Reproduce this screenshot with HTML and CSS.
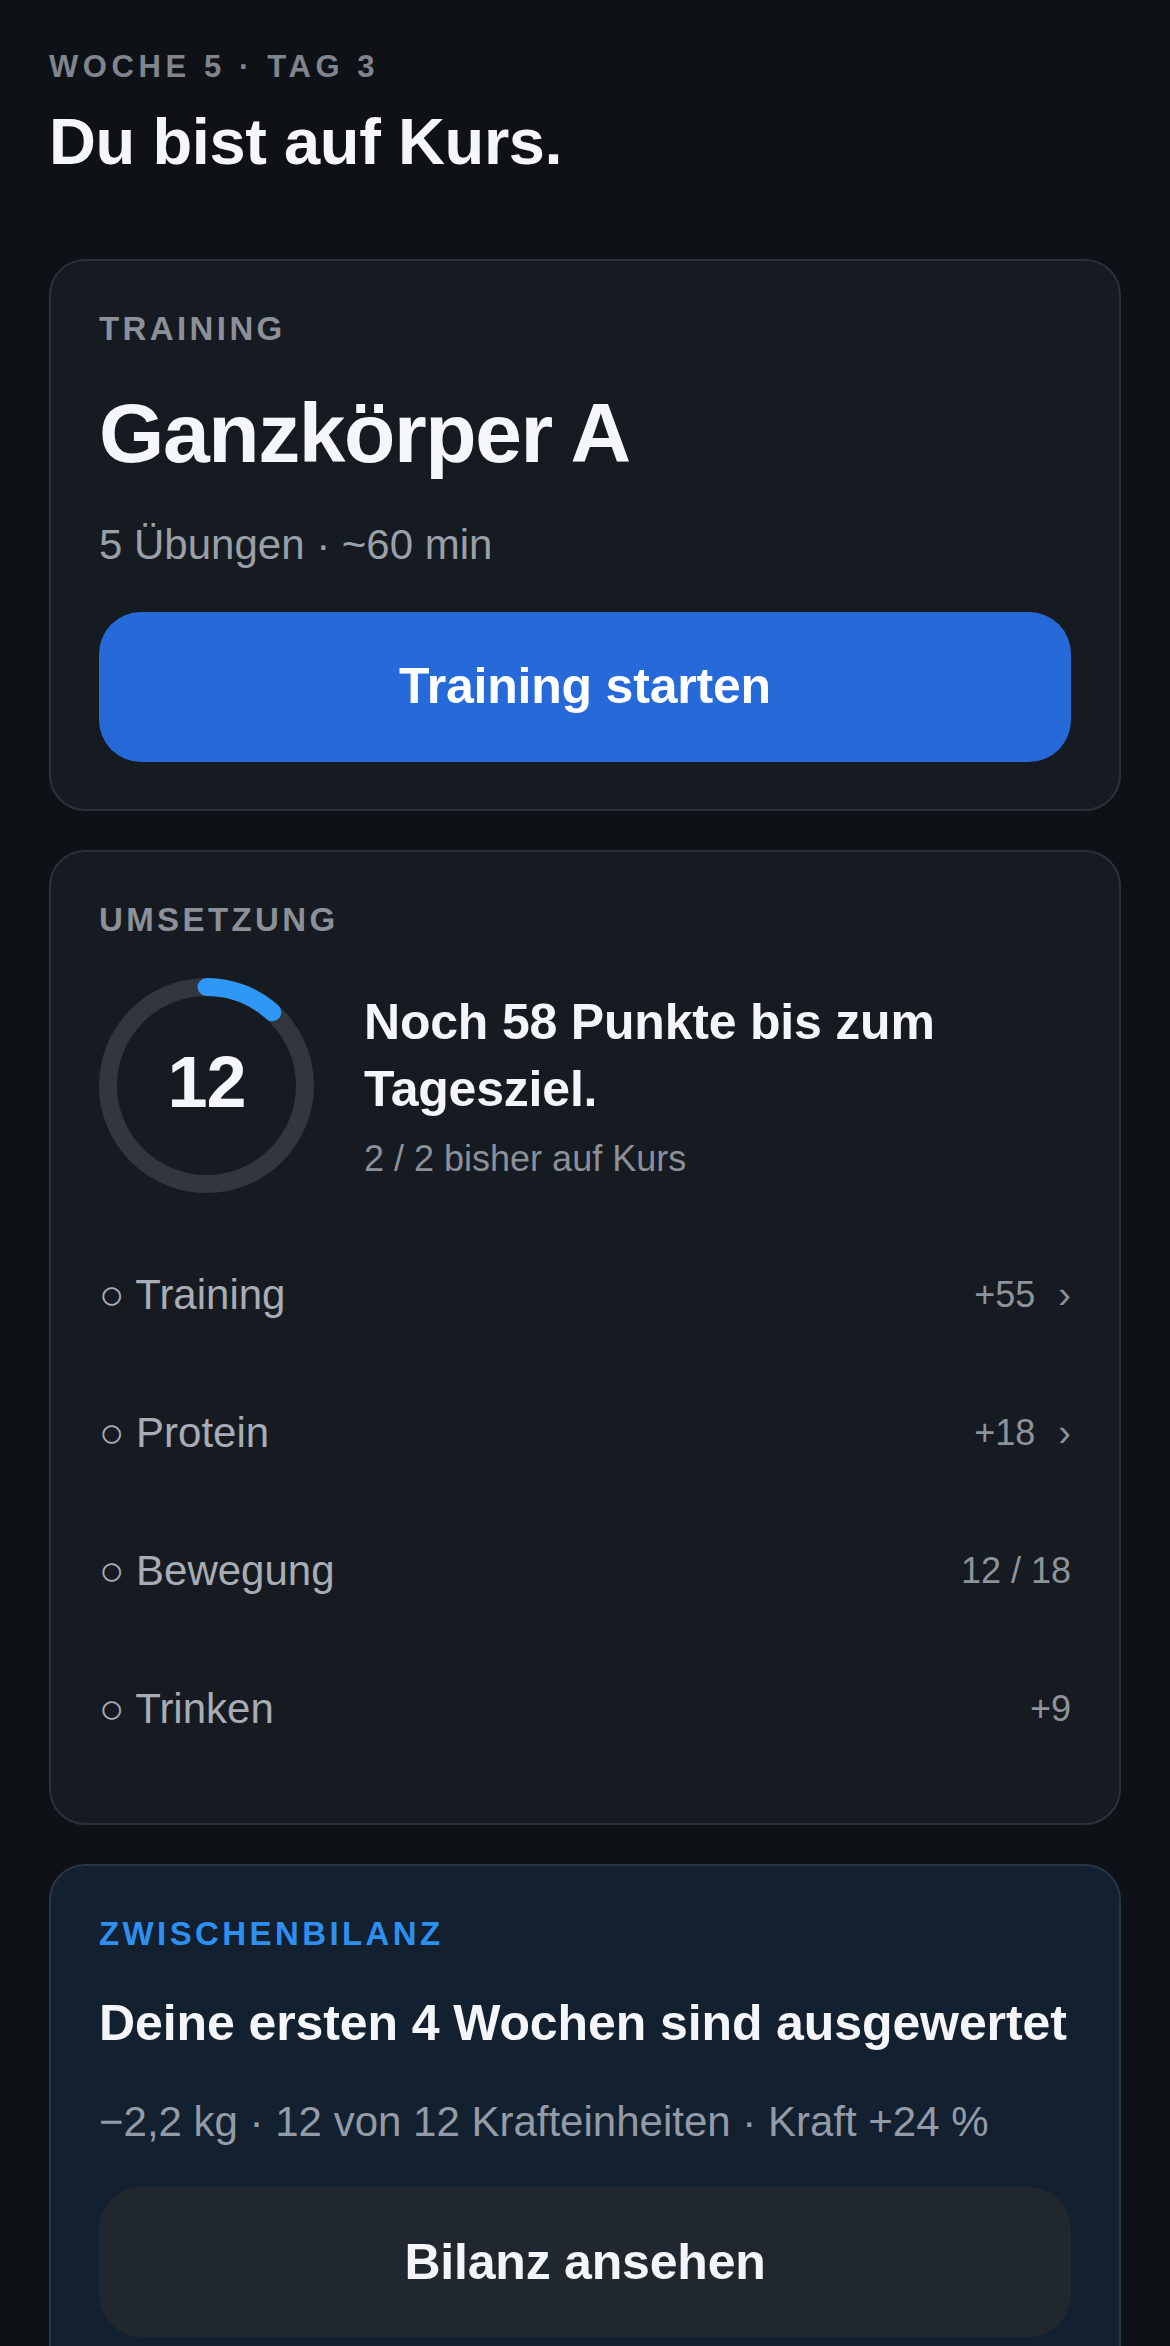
FILE: index.html
```html
<!DOCTYPE html>
<html lang="de">
    <head>
        <meta charset="UTF-8">
        <meta name="viewport" content="width=device-width, initial-scale=1.0">
        <title>Heute</title>
        <link rel="stylesheet" href="styles.css">
    </head>
    <body>
        <main class="page">
            <header class="intro">
                <p class="eyebrow">WOCHE 5 · TAG 3</p>
                <h1>Du bist auf Kurs.</h1>
            </header>

            <section class="card card-training">
                <p class="label">TRAINING</p>
                <h2 class="workout-title">Ganzkörper A</h2>
                <p class="meta">5 Übungen · ~60 min</p>
                <button class="btn btn-primary" type="button">Training starten</button>
            </section>

            <section class="card card-progress">
                <p class="label">UMSETZUNG</p>
                <div class="score">
                    <div class="ring">
                        <svg width="215" height="215" viewBox="0 0 215 215">
                            <circle class="ring-track" cx="107.5" cy="107.5" r="98.5" />
                            <circle class="ring-value" cx="107.5" cy="107.5" r="98.5" stroke-dasharray="72 619" transform="rotate(-90 107.5 107.5)" />
                        </svg>
                        <span class="ring-number">12</span>
                    </div>
                    <div class="score-text">
                        <h3 class="heading">Noch 58 Punkte bis zum Tagesziel.</h3>
                        <p class="score-sub">2 / 2 bisher auf Kurs</p>
                    </div>
                </div>
                <ul class="rows">
                    <li class="row"><span class="row-label">○ Training</span><span class="row-value">+55<span class="chev">›</span></span></li>
                    <li class="row"><span class="row-label">○ Protein</span><span class="row-value">+18<span class="chev">›</span></span></li>
                    <li class="row"><span class="row-label">○ Bewegung</span><span class="row-value">12 / 18</span></li>
                    <li class="row"><span class="row-label">○ Trinken</span><span class="row-value">+9</span></li>
                </ul>
            </section>

            <section class="card card-review">
                <p class="label label-accent">ZWISCHENBILANZ</p>
                <h3 class="heading review-title">Deine ersten 4 Wochen sind ausgewertet</h3>
                <p class="meta meta-review">−2,2 kg · 12 von 12 Krafteinheiten · Kraft +24 %</p>
                <button class="btn btn-secondary" type="button">Bilanz ansehen</button>
            </section>
        </main>
    </body>
</html>
```

FILE: styles.css
```css
html, body { margin: 0; padding: 0; }
body { background: #0e1116; font-family: "Liberation Sans", Arial, sans-serif; color: #f3f5f8; }
p, h1, h2, h3, ul, li { margin: 0; padding: 0; }
ul { list-style: none; }

.page { padding: 49px 49px 0; }
.intro { margin-bottom: 78px; }
.eyebrow { font-size: 31px; line-height: 36px; font-weight: 700; letter-spacing: 4.6px; color: #80858d; }
.intro h1 { margin-top: 18px; font-size: 65px; line-height: 78px; font-weight: 700; letter-spacing: -0.4px; color: #f4f6f9; }

.card { background: #161b22; border: 2px solid #2c3139; border-radius: 36px; padding: 48px; margin-bottom: 39px; }
.card-training { padding-bottom: 47px; }
.card-progress { padding-bottom: 45px; }
.card-review { background: #13202f; border-color: #27364a; }

.label { font-size: 33px; line-height: 40px; font-weight: 700; letter-spacing: 3.4px; color: #8b9099; }
.label-accent { color: #2f8ff0; }

.workout-title { margin-top: 34px; font-size: 84px; line-height: 100px; font-weight: 700; letter-spacing: -1.4px; color: #f4f6f9; }
.meta { margin-top: 35px; font-size: 42px; line-height: 54px; color: #9aa0a8; }
.meta-review { margin-top: 38px; color: #939ba7; }

.btn { display: block; width: 100%; height: 150px; margin-top: 40px; border: 0; border-radius: 42px; font-family: inherit; font-size: 50px; font-weight: 700; letter-spacing: -0.2px; cursor: pointer; }
.btn-primary { background: #2669d8; color: #fff; padding-bottom: 4px; }
.btn-secondary { margin-top: 38px; background: #21272f; color: #f3f5f8; }

.heading { font-size: 50px; line-height: 67px; font-weight: 700; letter-spacing: -0.2px; color: #f3f5f8; }
.review-title { margin-top: 36px; letter-spacing: -0.1px; }

.score { display: flex; align-items: center; gap: 50px; margin-top: 38px; }
.ring { display: grid; place-items: center; width: 215px; height: 215px; flex: none; }
.ring svg, .ring-number { grid-area: 1 / 1; }
.ring svg { display: block; }
.ring-track { fill: none; stroke: #33363d; stroke-width: 18; }
.ring-value { fill: none; stroke: #2f98f7; stroke-width: 18; stroke-linecap: round; }
.ring-number { padding-bottom: 7px; font-size: 72px; line-height: 1; font-weight: 700; letter-spacing: -1px; color: #f4f6f9; }
.score-text { flex: 1; }
.score-sub { margin-top: 12px; font-size: 36px; line-height: 47px; color: #8b9099; }

.rows { margin-top: 33px; }
.row { display: flex; align-items: center; justify-content: space-between; height: 138px; }
.row-label { font-size: 42px; line-height: 54px; color: #a8adb5; }
.row-value { display: flex; align-items: center; font-size: 36px; line-height: 46px; color: #8e939b; }
.chev { margin-left: 23px; font-size: 38px; color: #8a8f98; }
```
